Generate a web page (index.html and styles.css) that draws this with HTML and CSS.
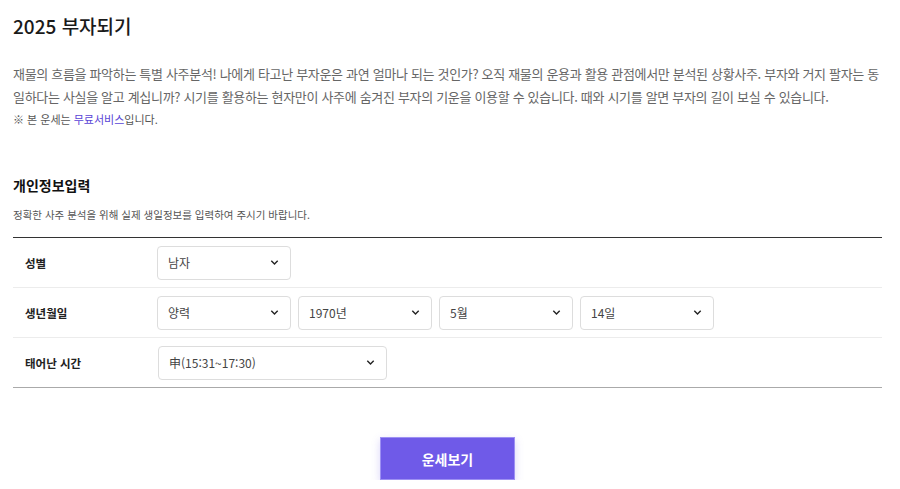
FILE: index.html
```html
<!DOCTYPE html>
<html lang="ko">
<head>
<meta charset="utf-8">
<link rel="stylesheet" href="styles.css">
</head>
<body>
<div class="page">
  <h1 class="title">2025 부자되기</h1>
  <p class="desc">재물의 흐름을 파악하는 특별 사주분석! 나에게 타고난 부자운은 과연 얼마나 되는 것인가? 오직 재물의 운용과 활용 관점에서만 분석된 상황사주. 부자와 거지 팔자는 동일하다는 사실을 알고 계십니까? 시기를 활용하는 현자만이 사주에 숨겨진 부자의 기운을 이용할 수 있습니다. 때와 시기를 알면 부자의 길이 보실 수 있습니다.</p>
  <p class="note">※ 본 운세는 <span class="free">무료서비스</span>입니다.</p>

  <h2 class="sec-title">개인정보입력</h2>
  <p class="sec-sub">정확한 사주 분석을 위해 실제 생일정보를 입력하여 주시기 바랍니다.</p>

  <div class="form">
    <div class="row">
      <div class="label">성별</div>
      <div class="fields">
        <div class="sel"><span>남자</span><svg viewBox="0 0 12 12"><path d="M2.5 4.2 6 7.7 9.5 4.2"/></svg></div>
      </div>
    </div>
    <div class="row">
      <div class="label">생년월일</div>
      <div class="fields">
        <div class="sel"><span>양력</span><svg viewBox="0 0 12 12"><path d="M2.5 4.2 6 7.7 9.5 4.2"/></svg></div>
        <div class="sel"><span>1970년</span><svg viewBox="0 0 12 12"><path d="M2.5 4.2 6 7.7 9.5 4.2"/></svg></div>
        <div class="sel"><span>5월</span><svg viewBox="0 0 12 12"><path d="M2.5 4.2 6 7.7 9.5 4.2"/></svg></div>
        <div class="sel"><span>14일</span><svg viewBox="0 0 12 12"><path d="M2.5 4.2 6 7.7 9.5 4.2"/></svg></div>
      </div>
    </div>
    <div class="row last">
      <div class="label">태어난 시간</div>
      <div class="fields">
        <div class="sel wide"><span>申(15:31~17:30)</span><svg viewBox="0 0 12 12"><path d="M2.5 4.2 6 7.7 9.5 4.2"/></svg></div>
      </div>
    </div>
  </div>

  <div class="actions">
    <button class="btn">운세보기</button>
  </div>
</div>
</body>
</html>
```

FILE: styles.css
```css
* { box-sizing: border-box; }
html, body { margin: 0; padding: 0; background: #fff; }
body {
  font-family: "Noto Sans CJK KR", "Noto Sans", sans-serif;
  color: #222;
}
.page {
  padding: 12px 18px 0 13px;
}
.title {
  margin: 0;
  font-size: 19px;
  font-weight: 500;
  line-height: 28px;
  color: #1a1a1a;
}
.desc {
  margin: 22px 0 0;
  font-size: 13px;
  line-height: 23px;
  color: #666;
  letter-spacing: -0.32px;
  word-break: break-all;
}
.note {
  margin: 1px 0 0;
  font-size: 11px;
  line-height: 20px;
  color: #555;
}
.free { color: #5a45d6; }
.sec-title {
  margin: 45px 0 0;
  font-size: 14px;
  font-weight: 700;
  line-height: 22px;
  color: #111;
}
.sec-sub {
  margin: 10px 0 0;
  font-size: 10.5px;
  line-height: 18px;
  color: #555;
}
.form {
  margin-top: 13px;
  border-top: 1px solid #333;
  border-bottom: 1px solid #aaa;
}
.row {
  display: flex;
  align-items: center;
  height: 50px;
  border-bottom: 1px solid #ececec;
}
.row.last { border-bottom: none; height: 49px; }
.label {
  width: 144px;
  padding-left: 12px;
  font-size: 11.5px;
  font-weight: 700;
  color: #222;
}
.fields {
  display: flex;
  gap: 7px;
}
.sel {
  width: 134px;
  height: 34px;
  border: 1px solid #ddd;
  border-radius: 4px;
  display: flex;
  align-items: center;
  justify-content: space-between;
  padding: 0 10px 0 10px;
  font-size: 12px;
  color: #444;
}
.sel.wide { width: 229px; margin-left: 1px; }
.sel svg {
  width: 11px;
  height: 11px;
  fill: none;
  stroke: #222;
  stroke-width: 1.5;
}
.actions {
  display: flex;
  justify-content: center;
  padding-top: 49px;
}
.btn {
  width: 135px;
  height: 43px;
  border: 1px solid #9d90f3;
  background: #6f5ae8;
  color: #fff;
  font-family: "Noto Sans CJK KR", sans-serif;
  font-size: 14px;
  font-weight: 700;
  box-shadow: 0 3px 8px rgba(111, 90, 232, 0.25);
  cursor: pointer;
}
```
